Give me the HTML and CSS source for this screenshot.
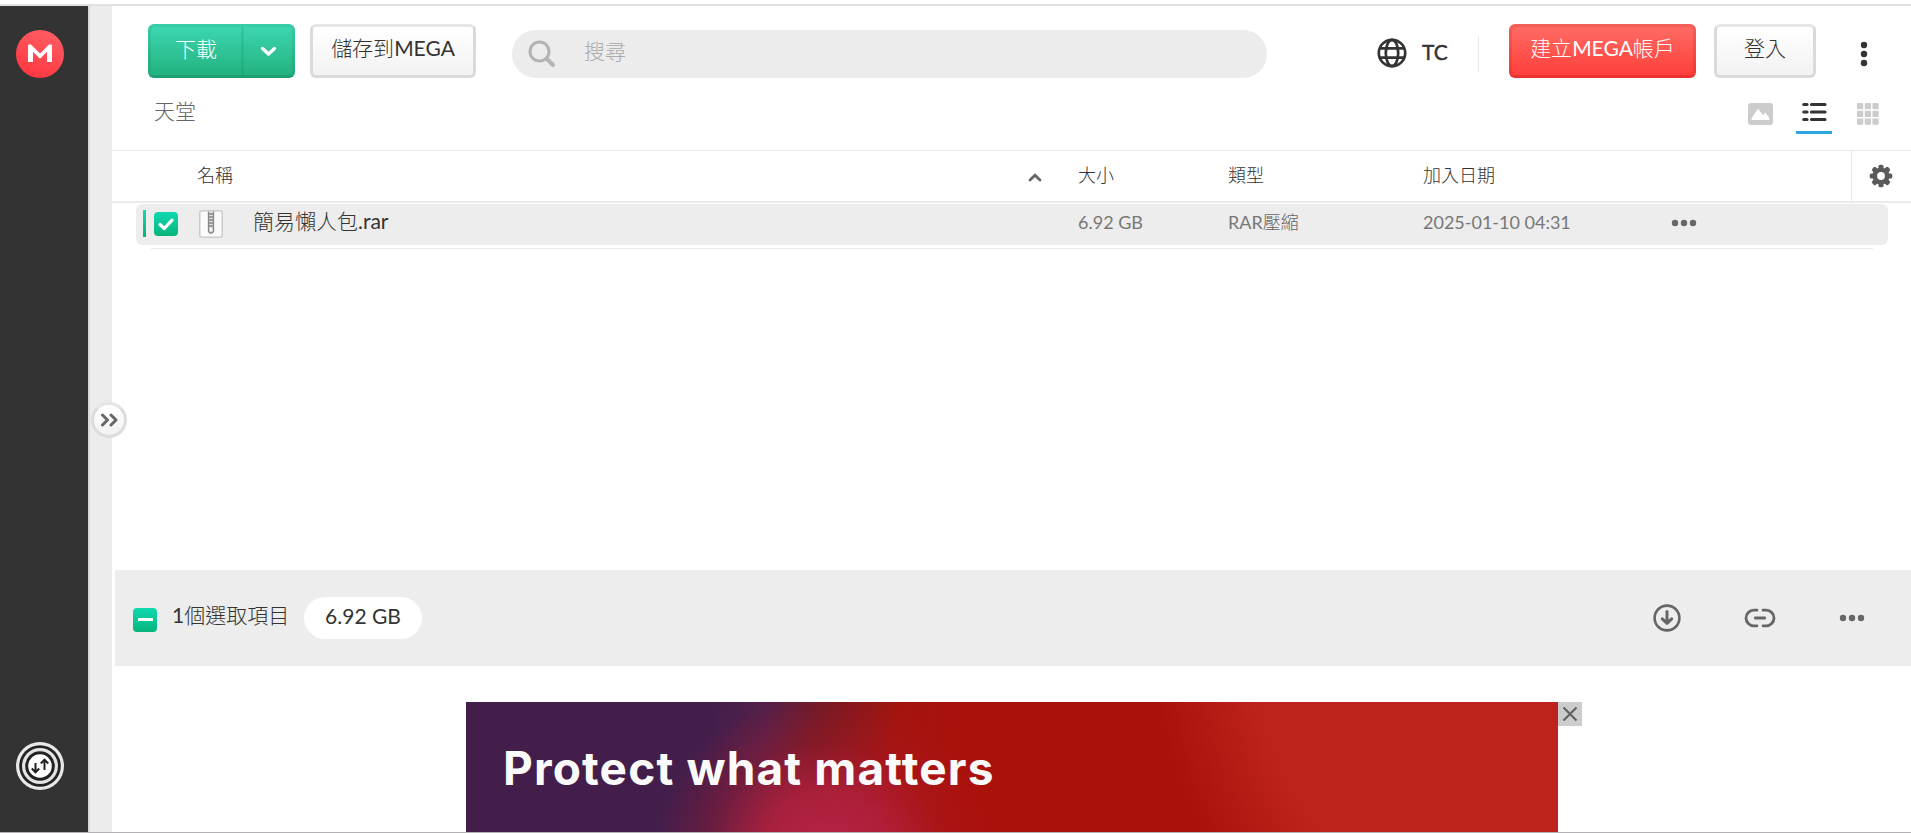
FILE: index.html
```html
<!DOCTYPE html>
<html lang="zh-Hant">
<head>
<meta charset="utf-8">
<title>天堂</title>
<link rel="stylesheet" href="styles.css">
</head>
<body>
<div class="app">
  <nav class="rail">
    <svg class="logo" width="48" height="48" viewBox="0 0 48 48"><defs><linearGradient id="red" x1=".7" y1="0" x2=".3" y2="1"><stop offset="0" stop-color="#ff5c64"/><stop offset="1" stop-color="#ff3740"/></linearGradient></defs><circle cx="24" cy="24" r="24" fill="url(#red)"/><path d="M12 32V15.500Q12 14.500 13 14.500H15L24 23.500L33 14.500H35Q36 14.500 36 15.500V32H31V21.800L24 28.800L17 21.800V32Z" fill="#fff"/></svg>
    <svg class="transfer" width="48" height="48" viewBox="0 0 48 48"><circle cx="24" cy="24" r="24" fill="#e9e9e9"/><circle cx="24" cy="24" r="20.800" fill="#222"/><circle cx="24" cy="24" r="18" fill="#e4e4e4"/><circle cx="24" cy="24" r="14.800" fill="#222"/><circle cx="24" cy="24" r="11.800" fill="#fff"/><path d="M19.500 21V30M15.800 26.500L19.500 30.300L23.200 26.500M28.500 28V18M24.800 21.500L28.500 17.700L32.200 21.500" fill="none" stroke="#222" stroke-width="2"/></svg>
  </nav>
  <div class="gutter">
    <button class="expand"><svg width="18" height="14" viewBox="0 0 18 14"><path d="M2.500 2L7.500 7L2.500 12M11 2L16 7L11 12" fill="none" stroke="#666" stroke-width="3" stroke-linejoin="round" stroke-linecap="round"/></svg></button>
  </div>
  <main class="main">
    <header class="topbar">
      <div class="split"><span class="split-label">下載</span><span class="split-more"><svg width="17" height="11" viewBox="0 0 17 11"><path d="M2.500 2.500L8.500 8L14.500 2.500" fill="none" stroke="#fff" stroke-width="3.400" stroke-linecap="round" stroke-linejoin="round"/></svg></span></div>
      <button class="btn save">儲存到<span class="latin">MEGA</span></button>
      <div class="search"><svg width="28" height="28" viewBox="0 0 28 28"><circle cx="11.500" cy="11.500" r="9.500" fill="none" stroke="#b3b3b3" stroke-width="3"/><path d="M18.500 18.500L25 25" stroke="#b3b3b3" stroke-width="4" stroke-linecap="round"/></svg><span>搜尋</span></div>
      <div class="lang"><svg width="30" height="30" viewBox="0 0 30 30" fill="none" stroke="#333" stroke-width="2.700"><circle cx="15" cy="15" r="13.200"/><ellipse cx="15" cy="15" rx="6.200" ry="13.200"/><path d="M3 10.300H27M3 19.700H27"/></svg><span>TC</span></div>
      <button class="btn create">建立<span class="latin">MEGA</span>帳戶</button>
      <button class="btn login">登入</button>
      <svg class="menu" width="8" height="28" viewBox="0 0 8 28" fill="#333"><circle cx="4" cy="5" r="3.200"/><circle cx="4" cy="14" r="3.200"/><circle cx="4" cy="23" r="3.200"/></svg>
    </header>
    <div class="crumbs">
      <span class="crumb">天堂</span>
      <div class="views">
        <span class="view"><svg width="25" height="22" viewBox="0 0 25 22"><rect width="25" height="22" rx="3" fill="#ccc"/><path d="M3.500 15.500L10 5.500L15 12L17.500 9.500L21.500 15.500Q22 17 20.500 17H4.500Q3 17 3.500 15.500Z" fill="#fff"/></svg></span>
        <span class="view active"><svg width="25" height="20" viewBox="0 0 25 20" stroke="#333" stroke-width="3.200" stroke-linecap="round"><path d="M1.800 2.500H5M9.500 2.500H23M1.800 10H5M9.500 10H23M1.800 17.500H5M9.500 17.500H23"/></svg></span>
        <span class="view"><svg width="22" height="22" viewBox="0 0 22 22" fill="#ccc"><rect width="6.300" height="6.300" rx="1"/><rect x="7.700" width="6.300" height="6.300" rx="1"/><rect x="15.400" width="6.300" height="6.300" rx="1"/><rect y="7.700" width="6.300" height="6.300" rx="1"/><rect x="7.700" y="7.700" width="6.300" height="6.300" rx="1"/><rect x="15.400" y="7.700" width="6.300" height="6.300" rx="1"/><rect y="15.400" width="6.300" height="6.300" rx="1"/><rect x="7.700" y="15.400" width="6.300" height="6.300" rx="1"/><rect x="15.400" y="15.400" width="6.300" height="6.300" rx="1"/></svg></span>
      </div>
    </div>
    <div class="thead">
      <span class="th-name">名稱</span>
      <svg class="sort" width="14" height="9" viewBox="0 0 14 9"><path d="M2 7L7 2.200L12 7" fill="none" stroke="#666" stroke-width="2.800" stroke-linecap="round"/></svg>
      <span class="c-size">大小</span><span class="c-type">類型</span><span class="c-date">加入日期</span>
      <span class="gear"><svg width="24" height="24" viewBox="-12 -12 24 24"><g fill="#5a5a5a"><g id="t"><rect x="-2.500" y="-11.300" width="5" height="22.600" rx="1.600"/><rect x="-11.300" y="-2.500" width="22.600" height="5" rx="1.600"/></g><use href="#t" transform="rotate(45)"/><circle r="8.600"/></g><circle r="3.900" fill="#fff"/></svg></span>
    </div>
    <div class="list">
      <div class="row">
        <i class="mark"></i>
        <span class="check"><svg width="24" height="24" viewBox="0 0 24 24"><path d="M6 12.500L10.300 16.500L18 8.200" fill="none" stroke="#fff" stroke-width="3.300" stroke-linecap="round" stroke-linejoin="round"/></svg></span>
        <svg class="file" width="24" height="28" viewBox="0 0 24 28"><rect x=".75" y=".75" width="22.500" height="26.500" rx="2.500" fill="#fafafa" stroke="#ccc" stroke-width="1.500"/><path d="M9.500 1.500V20.500Q9.500 23 12 23Q14.500 23 14.500 20.500V1.500" fill="#ddd" stroke="#888" stroke-width="1.300"/><path d="M10 4H14M10 7H14M10 10H14M10 13H14M10 16H14" stroke="#888" stroke-width="1.300"/><path d="M12 18V21" stroke="#fff" stroke-width="1.500"/></svg>
        <span class="name">簡易懶人包<span class="latin">.rar</span></span>
        <span class="c-size">6.92 GB</span><span class="c-type">RAR<span class="han">壓縮</span></span><span class="c-date">2025-01-10 04:31</span>
        <svg class="dots" width="26" height="8" viewBox="0 0 26 8" fill="#666"><circle cx="4" cy="4" r="3.200"/><circle cx="13" cy="4" r="3.200"/><circle cx="22" cy="4" r="3.200"/></svg>
      </div>
      <hr>
    </div>
    <div class="selection">
      <span class="check"><svg width="24" height="24" viewBox="0 0 24 24"><path d="M5 11.500H20" stroke="#fff" stroke-width="3"/></svg></span>
      <span class="count"><span class="latin">1</span>個選取項目</span>
      <span class="pill">6.92 GB</span>
      <div class="actions">
        <svg width="28" height="28" viewBox="0 0 28 28" fill="none" stroke="#666" stroke-width="2.600" stroke-linecap="round" stroke-linejoin="round"><circle cx="14" cy="14" r="12.400"/><path d="M14 7.500V19M9.300 14.800L14 19.300L18.700 14.800" stroke-width="3"/></svg>
        <svg width="32" height="20" viewBox="0 0 32 20" fill="none" stroke="#666" stroke-width="2.800" stroke-linecap="round"><path d="M13 2.200H9.800A7.800 7.800 0 0 0 9.800 17.800H13M19 2.200H22.200A7.800 7.800 0 0 1 22.200 17.800H19M11.300 10H20.700"/></svg>
        <svg width="26" height="8" viewBox="0 0 26 8" fill="#666"><circle cx="4" cy="4" r="3.200"/><circle cx="13" cy="4" r="3.200"/><circle cx="22" cy="4" r="3.200"/></svg>
      </div>
    </div>
    <div class="promo">
      <div class="banner"><span>Protect what matters</span></div>
      <button class="close"><svg width="16" height="16" viewBox="0 0 16 16"><path d="M1.500 1.500L14.500 14.500M14.500 1.500L1.500 14.500" stroke="#5f5f5f" stroke-width="2"/></svg></button>
    </div>
  </main>
</div>
</body>
</html>
```
FILE: styles.css
```css
* { box-sizing: border-box; }
body { margin: 0; height: 833px; overflow: hidden; background: #fff; color: #333; font: 300 21px/30px Lato, "Noto Sans CJK TC", sans-serif; }
svg { display: block; flex: none; }
button { margin: 0; padding: 0; font: inherit; color: inherit; border: 0; }
.latin { font-weight: 400; }
.app { display: flex; height: 833px; padding-top: 4px; border-bottom: 1px solid #b4b1b5; }
.app::before { content: ""; position: absolute; left: 0; top: 4px; width: 100%; height: 2px; background: #e0e0e0; }
.rail { width: 88px; margin-top: 2px; padding: 24px 16px 42px; background: #333; display: flex; flex-direction: column; justify-content: space-between; flex: none; }
.gutter { position: relative; width: 24px; margin-top: 2px; background: #ececec; border-left: 2px solid #dadada; flex: none; }
.expand { position: absolute; left: 1px; top: 396px; width: 36px; height: 36px; border-radius: 50%; border: 3px solid #dcdcdc; border-top-color: #e5e5e5; background: linear-gradient(#fff, #f2f2f2); display: flex; align-items: center; justify-content: center; }
.main { flex: 1; min-width: 0; margin-top: 2px; display: flex; flex-direction: column; }
.topbar { height: 78px; padding: 18px 0 0 36px; display: flex; align-items: flex-start; flex: none; }
.split { width: 147px; height: 54px; border-radius: 6px; border: 3px solid rgba(0, 80, 50, .08); border-bottom-color: rgba(0, 80, 50, .18); background: linear-gradient(#3ed8b2, #21b07c) border-box; color: #fff; display: flex; }
.split-label { width: 93px; text-align: center; line-height: 43px; border-right: 3px solid rgba(0, 80, 50, .1); }
.split-more { flex: 1; display: flex; align-items: center; justify-content: center; }
.btn { height: 54px; border-radius: 6px; border: 3px solid #dadada; border-top-color: #e6e6e6; background: linear-gradient(#fff, #f2f2f2); line-height: 42px; padding-bottom: 6px; white-space: nowrap; flex: none; }
.save { width: 166px; margin-left: 15px; }
.search { width: 755px; height: 48px; margin: 6px 0 0 36px; padding-left: 16px; border-radius: 24px; background: #ececec; display: flex; align-items: center; gap: 28px; color: #aaa; }
.search svg { margin-top: -1px; }
.search span { padding-bottom: 6px; }
.lang { width: 102px; height: 36px; margin: 12px 0 0 110px; display: flex; align-items: center; gap: 15px; border-right: 1px solid #e8e8e8; }
.lang svg { margin-top: -2px; }
.lang span { padding-bottom: 4px; font-weight: 400; -webkit-text-stroke: .4px #333; }
.create { width: 187px; margin-left: 30px; color: #fff; border-color: rgba(160, 0, 0, .12); border-bottom-color: rgba(160, 0, 0, .2); background: linear-gradient(#ff6d66, #ff3d39) border-box; }
.login { width: 102px; margin-left: 18px; }
.menu { margin: 16px 0 0 44px; }
.crumbs { height: 67px; padding: 12px 25px 0 42px; display: flex; justify-content: space-between; border-bottom: 1px solid #eaeaea; flex: none; color: #666; }
.views { display: flex; gap: 18px; padding-top: 2px; }
.view { width: 36px; height: 36px; padding-top: 5px; display: flex; align-items: flex-start; justify-content: center; }
.active { padding-top: 4px; border-bottom: 3px solid #2ba6de; }
.thead { height: 52px; padding-left: 85px; display: flex; align-items: center; border-bottom: 2px solid #ebebeb; font-size: 18px; flex: none; }
.thead > span:not(.gear) { padding-bottom: 2px; }
.th-name { width: 831px; }
.sort { margin: 2px 36px 0 0; }
.c-size { width: 150px; } .c-type { width: 195px; } .c-date { width: 252px; }
.gear { margin-left: auto; width: 60px; height: 50px; padding-right: 1px; border-left: 1px solid #e8e8e8; display: flex; align-items: center; justify-content: center; }
.list { padding: 1px 23px 0 24px; height: 367px; flex: none; }
.row { height: 41px; border-radius: 6px; background: #ededed; padding: 0 0 2px 7px; display: flex; align-items: center; }
.list hr { margin: 3px 15px 0; border: 0; height: 1px; background: #eaeaea; }
.mark { width: 3px; height: 27px; margin-right: 8px; background: linear-gradient(#10d8b0, #07b47a); }
.check { width: 24px; height: 24px; border-radius: 4px; background: linear-gradient(#10d8b0, #07b47a); flex: none; }
.file { margin-left: 21px; }
.name { margin-left: 30px; width: 825px; padding-bottom: 5px; }
.row .c-size, .row .c-type, .row .c-date { font-size: 18px; font-weight: 400; color: #777; padding-bottom: 3px; }
.row .han { font-weight: 300; color: #666; }
.dots { margin: -1px 0 0 -4px; }
.selection { height: 96px; margin-left: 3px; padding: 0 46px 0 18px; background: #ededed; display: flex; align-items: center; flex: none; }
.selection .check { margin-top: 4px; }
.count { margin-left: 15px; width: 132px; padding-bottom: 6px; }
.pill { width: 118px; height: 42px; border-radius: 21px; background: #fff; text-align: center; line-height: 38px; font-weight: 400; }
.actions { margin-left: auto; display: flex; align-items: center; gap: 63px; }
.promo { display: flex; align-items: flex-start; margin: 36px 0 0 354px; height: 130px; overflow: hidden; }
.banner { width: 1092px; height: 130px; padding: 41px 0 0 37px; color: #fafafa; font: 700 46px/50px Inter, sans-serif; letter-spacing: 1.15px; font-variant-ligatures: none; white-space: nowrap; background: radial-gradient(ellipse 170px 160px at 360px 150px, #b42244 0 12%, rgba(178, 32, 62, .85) 38%, rgba(173, 25, 42, .35) 68%, rgba(170, 17, 12, 0) 100%), radial-gradient(circle at 1132px -80px, #bd231a 0 350px, #aa110b 450px, rgba(170, 17, 11, 0) 470px), linear-gradient(98deg, #431e4b 0 245px, #54204a 300px, #701a25 352px, #a4140e 430px, #aa110b 500px); }
.close { width: 24px; height: 24px; background: #ccc; display: flex; align-items: center; justify-content: center; }
```
